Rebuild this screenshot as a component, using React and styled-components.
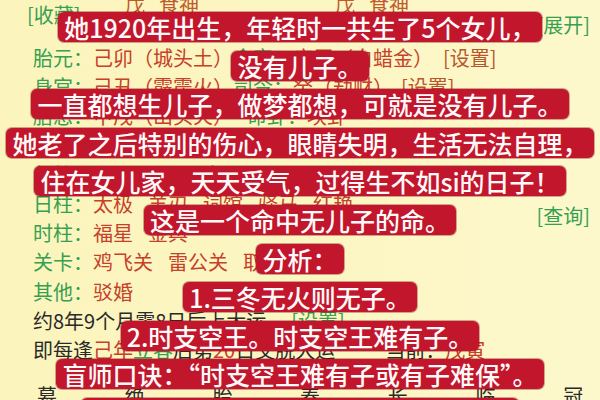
import React from 'react';
import styled, { createGlobalStyle } from 'styled-components';

const Global = createGlobalStyle`
  html, body { margin: 0; padding: 0; }
  body {
    width: 600px;
    height: 400px;
    overflow: hidden;
    background: #fbf5c0;
    font-family: "Noto Sans CJK SC", "Noto Sans", sans-serif;
  }
`;

const Screen = styled.div`
  position: relative;
  width: 600px;
  height: 400px;
  overflow: hidden;
  background: linear-gradient(90deg, #fbf4bc 0%, #fcf6c4 60%, #fdf8cc 100%);
`;

const Sheet = styled.div`
  display: flex;
  flex-direction: column;
  padding: 0 10px 0 33px;
  font-size: 20px;
  color: #2a2a2a;
`;

const TopRow = styled.div`
  display: flex;
  align-items: center;
  height: 20px;
  line-height: 20px;
  margin: -5px 0 -10px;
  padding-left: 92px;
  gap: 136px;
  color: #c05a2c;
`;

const Pair = styled.div`
  display: flex;
  gap: 14px;
`;

const HeadRow = styled.div`
  display: flex;
  justify-content: space-between;
  height: 30px;
  margin-left: -6px;
  margin-bottom: 8px;
  line-height: 20px;
  color: #35a052;
`;

const HeadLink = styled.span`
  align-self: ${(p) => (p.$end ? 'flex-end' : 'flex-start')};
`;

const Row = styled.div`
  display: flex;
  align-items: center;
  height: 29.2px;
  white-space: nowrap;
`;

const PairRows = styled.div`
  display: grid;
  grid-template-columns: 1fr auto;
  align-items: center;
`;

const Query = styled.span`
  grid-column: 2;
  grid-row: 1 / span 2;
  color: #35a052;
  margin-top: -6px;
`;

const Label = styled.span`
  color: #35a052;
`;

const Value = styled.span`
  color: #c6402a;
  margin-right: ${(p) => p.$gap || 0}px;
`;

const Values = styled.span`
  display: inline-flex;
  gap: 15px;
  color: #c6402a;
`;

const Plain = styled.span`
  color: #2a2a2a;
  margin-left: ${(p) => p.$gap || 0}px;
`;

const SetLink = styled.span`
  color: ${(p) => (p.$green ? '#35a052' : '#b8562e')};
  margin-left: ${(p) => p.$gap || 0}px;
`;

const Stages = styled.div`
  display: grid;
  grid-template-columns: repeat(7, 87.7px);
  height: 29px;
  align-items: center;
  margin-top: 17px;
  padding-left: 4px;
  color: #2a2a2a;
`;

const Overlay = styled.div`
  position: absolute;
  inset: 0;
  display: flex;
  flex-direction: column;
  align-items: center;
  padding-top: 12px;
  gap: 8.6px;
`;

const Caption = styled.div`
  height: 30px;
  line-height: 30px;
  padding: 0 6px;
  background: #c2162d;
  color: #fffafa;
  border-radius: 6px;
  box-shadow: 0 0 0 1px rgba(130, 10, 20, 0.35);
  font-size: 25px;
  font-weight: 500;
  white-space: nowrap;
`;

const captions = [
  '她1920年出生，年轻时一共生了5个女儿，',
  '没有儿子。',
  '一直都想生儿子，做梦都想，可就是没有儿子。',
  '她老了之后特别的伤心，眼睛失明，生活无法自理，',
  '住在女儿家，天天受气，过得生不如si的日子！',
  '这是一个命中无儿子的命。',
  '分析：',
  '1.三冬无火则无子。',
  '2.时支空王。时支空王难有子。',
  '盲师口诀：“时支空王难有子或有子难保”。',
  '时柱为子女宫，时支空亡，子女缘薄。',
];

const stages = ['墓', '绝', '胎', '养', '长', '临', '冠'];

export default function App() {
  return (
    <Screen lang="zh-CN">
      <Global />
      <Sheet>
        <TopRow>
          <Pair>
            <span>戊</span>
            <span>食神</span>
          </Pair>
          <Pair>
            <span>戊</span>
            <span>食神</span>
          </Pair>
        </TopRow>
        <HeadRow>
          <HeadLink>[收藏]</HeadLink>
          <HeadLink $end>[展开]</HeadLink>
        </HeadRow>
        <Row>
          <Label>胎元：</Label>
          <Value>己卯（城头土）</Value>
          <Label>命宫：</Label>
          <Value>庚辰（白蜡金）</Value>
          <SetLink $gap={10}>[设置]</SetLink>
        </Row>
        <Row>
          <Label>身宫：</Label>
          <Value>己丑（霹雳火）</Value>
          <Label>司令：</Label>
          <Value>癸（劫财）</Value>
          <SetLink $gap={8}>[设置]</SetLink>
        </Row>
        <Row>
          <Label>胎息：</Label>
          <Value $gap={14}>甲戌（山头火）</Value>
          <Label>命卦：</Label>
          <Value>坎卦</Value>
        </Row>
        <Row>
          <Label>空亡：</Label>
          <Value $gap={14}>申酉 戌亥</Value>
          <Label>旬首：</Label>
          <Value>甲寅</Value>
        </Row>
        <Row>
          <Label>年柱：</Label>
          <Values>
            <span>福星</span>
            <span>天乙</span>
            <span>文昌</span>
          </Values>
        </Row>
        <PairRows>
          <Row>
            <Label>日柱：</Label>
            <Values>
              <span>太极</span>
              <span>羊刃</span>
              <span>词馆</span>
              <span>驿马</span>
              <span>红艳</span>
            </Values>
          </Row>
          <Row>
            <Label>时柱：</Label>
            <Values>
              <span>福星</span>
              <span>金舆</span>
            </Values>
          </Row>
          <Query>[查询]</Query>
        </PairRows>
        <Row>
          <Label>关卡：</Label>
          <Values>
            <span>鸡飞关</span>
            <span>雷公关</span>
            <span>取命关</span>
          </Values>
        </Row>
        <Row>
          <Label>其他：</Label>
          <Values>
            <span>驳婚</span>
          </Values>
        </Row>
        <Row>
          <Plain>约8年9个月零8日后上大运</Plain>
          <SetLink $green $gap={25}>[设置]</SetLink>
        </Row>
        <Row>
          <Plain>即每逢</Plain>
          <Value>己年</Value>
          <Label>立春</Label>
          <Plain>后第</Plain>
          <Value>20</Value>
          <Plain>日交脱大运</Plain>
          <Plain $gap={50}>当前：</Plain>
          <Value>戊寅</Value>
        </Row>
        <Stages>
          {stages.map((s) => (
            <span key={s}>{s}</span>
          ))}
        </Stages>
      </Sheet>
      <Overlay>
        {captions.map((c) => (
          <Caption key={c}>{c}</Caption>
        ))}
      </Overlay>
    </Screen>
  );
}
